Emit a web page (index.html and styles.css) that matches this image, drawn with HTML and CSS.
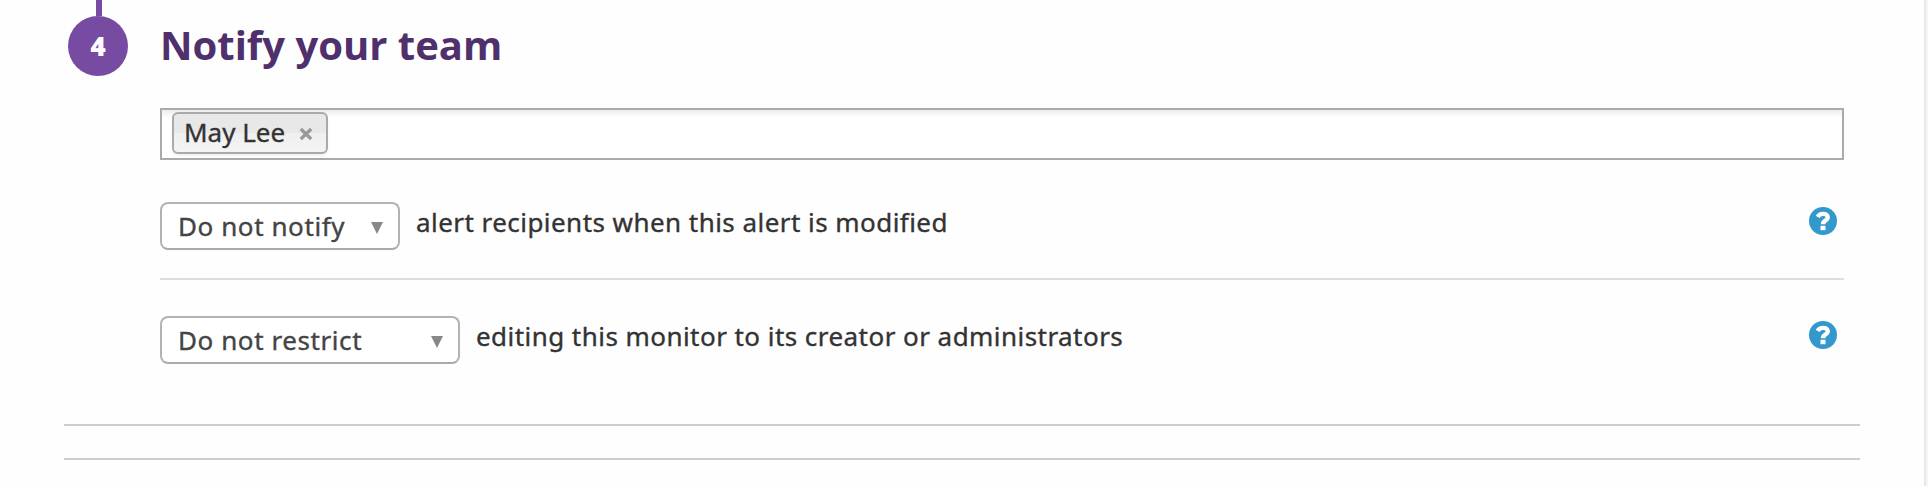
FILE: index.html
```html
<!DOCTYPE html>
<html lang="en">
<head>
<meta charset="utf-8">
<title>Notify your team</title>
<link rel="stylesheet" href="styles.css">
</head>
<body>
<main class="panel">
  <section class="step">
    <div class="rail">
      <div class="rail-line"></div>
      <div class="badge">4</div>
    </div>
    <div class="content">
      <h2 class="title">Notify your team</h2>
      <div class="recipients">
        <span class="chip"><span class="chip-name">May Lee</span>
          <svg class="chip-close" width="14" height="14" viewBox="0 0 14 14"><path d="M1.8 2 12.2 12M12.2 2 1.8 12" stroke="#999" stroke-width="3.3" fill="none"/></svg>
        </span>
      </div>
      <div class="row row-first">
        <div class="select select-notify"><span class="value-notify">Do not notify</span>
          <svg class="caret" width="12" height="12" viewBox="0 0 12 12"><path d="M0 0H12L6 12Z" fill="#888"/></svg>
        </div>
        <span class="label label-notify">alert recipients when this alert is modified</span>
        <svg class="help" width="28" height="28" viewBox="0 0 28 28"><circle cx="14" cy="14" r="14" fill="#3399cc"/><path d="M8.6 9.9C9.8 7.9 11.6 6.9 14 6.9C16.8 6.9 18.8 8.3 18.8 10.5C18.8 13.9 14 13 14 17.2" fill="none" stroke="#fff" stroke-width="4.4"/><rect x="11.5" y="18.8" width="5" height="4.4" fill="#fff"/></svg>
      </div>
      <div class="row row-second">
        <div class="select select-restrict"><span class="value-restrict">Do not restrict</span>
          <svg class="caret" width="12" height="12" viewBox="0 0 12 12"><path d="M0 0H12L6 12Z" fill="#888"/></svg>
        </div>
        <span class="label label-restrict">editing this monitor to its creator or administrators</span>
        <svg class="help" width="28" height="28" viewBox="0 0 28 28"><circle cx="14" cy="14" r="14" fill="#3399cc"/><path d="M8.6 9.9C9.8 7.9 11.6 6.9 14 6.9C16.8 6.9 18.8 8.3 18.8 10.5C18.8 13.9 14 13 14 17.2" fill="none" stroke="#fff" stroke-width="4.4"/><rect x="11.5" y="18.8" width="5" height="4.4" fill="#fff"/></svg>
      </div>
    </div>
  </section>
  <div class="footer-rules"></div>
</main>
</body>
</html>
```
FILE: styles.css
```css
* { box-sizing: border-box; }
body {
  margin: 0;
  height: 486px;
  overflow: hidden;
  background: #f5f5f5;
  font-family: "Noto Sans", "Open Sans", sans-serif;
  font-size: 26px;
  line-height: 36px;
  color: #333;
}
svg { display: block; flex: none; }
.panel {
  width: 1926px;
  height: 486px;
  background: #fefefe;
  border-right: 2px solid #e8e8e8;
  padding: 0 64px;
}
.step { display: flex; height: 424px; }
.rail {
  width: 60px;
  margin: 0 32px 0 4px;
  display: flex;
  flex-direction: column;
  align-items: center;
}
.rail-line { width: 6px; height: 16px; margin-left: 2px; background: #784ba3; }
.badge {
  width: 60px;
  height: 60px;
  border-radius: 50%;
  background: #784ba3;
  color: #fff;
  font: 800 26px/60px "Open Sans", sans-serif;
  text-align: center;
}
.content { width: 1684px; flex: none; }
.title {
  margin: 0;
  height: 108px;
  padding-top: 17px;
  font: 700 40px/56px "Open Sans", sans-serif;
  color: #4f306c;
}
.recipients {
  height: 52px;
  border: 2px solid #aaa;
  padding: 2px 10px;
  background: linear-gradient(#eee, #fff 8px);
}
.chip {
  display: flex;
  align-items: center;
  justify-content: space-between;
  width: 156px;
  height: 42px;
  padding: 0 13px 0 10px;
  border: 2px solid #aaa;
  border-radius: 6px;
  background: linear-gradient(#e8e8e8 0%, #e8e8e8 50%, #efefef 50%, #f4f4f4 100%);
  box-shadow: 0 2px 2px rgba(0, 0, 0, .05);
}
.chip-name, .select, .label { -webkit-text-stroke: .35px currentColor; }
.chip-name { margin-top: -2px; white-space: nowrap; }
.chip-close { margin-top: 2px; }
.row { display: flex; align-items: flex-start; white-space: nowrap; }
.row-first { height: 120px; padding-top: 42px; border-bottom: 2px solid #ddd; }
.row-second { padding-top: 36px; }
.select {
  display: flex;
  align-items: center;
  justify-content: space-between;
  height: 48px;
  padding: 0 15px 0 16px;
  border: 2px solid #b3b3b3;
  border-bottom-color: #aaa;
  border-radius: 8px;
  background: #fff;
  color: #444;
  letter-spacing: .58px;
}
.select-notify { width: 240px; }
.select-restrict { width: 300px; }
.caret { margin-top: 4px; }
.label { margin: 2px 0 0 16px; letter-spacing: .45px; }
.help { margin: 5px 7px 0 auto; }
.footer-rules { height: 36px; border: 2px solid #ccc; border-width: 2px 0; }
```
